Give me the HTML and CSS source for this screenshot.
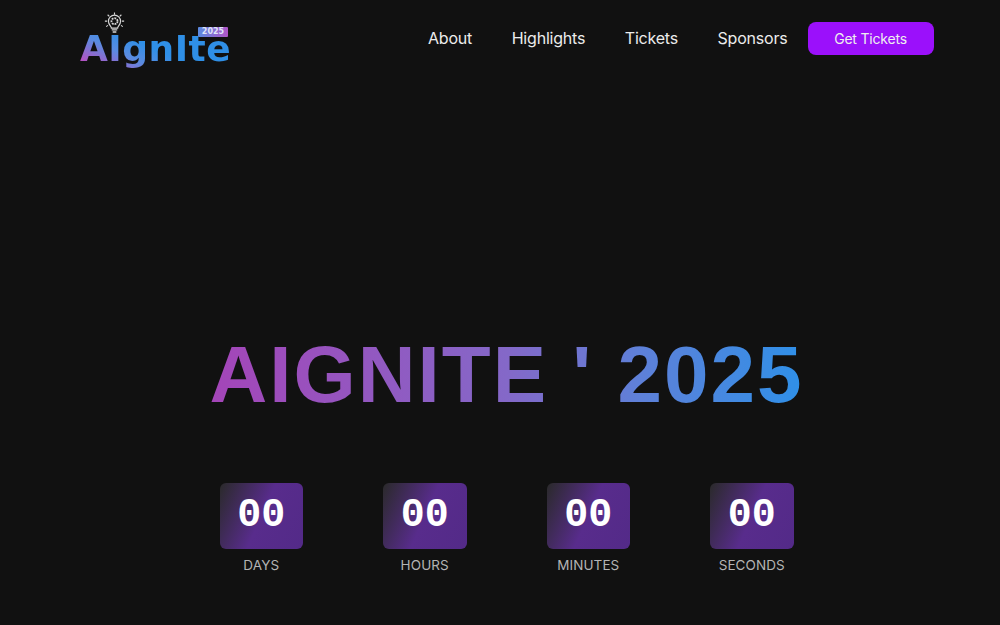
FILE: index.html
```html
<!DOCTYPE html>
<html lang="en">
<head>
  <meta charset="UTF-8">
  <meta name="viewport" content="width=device-width, initial-scale=1.0">
  <title>Aignite 2025</title>
  <link rel="stylesheet" href="styles.css">
</head>
<body>
  <header class="navbar">
    <a class="logo" href="#">
      <svg class="logo-bulb" viewBox="0 0 22 24" width="21" height="22" fill="none" stroke="#d8d8d8">
        <path d="M11 0.5v2.500M3.500 3l1.800 1.800M18.500 3l-1.800 1.800M0.500 10h2.500M19 10h2.500M2 16l1.800-1.400M20 16l-1.800-1.400" stroke-width="1.200"/>
        <path d="M7.600 17.500c0-2-3.200-3.200-3.200-7.500a6.600 6.600 0 0 1 13.200 0c0 4.300-3.200 5.500-3.200 7.500z" stroke-width="1.300"/>
        <circle cx="11" cy="10" r="3.300" stroke-width="2" stroke-dasharray="2 1"/>
        <path d="M8 19.500h6M9 21.800h4" stroke-width="1.500"/>
      </svg>
      <span class="logo-word">AIgnIte</span>
      <span class="logo-year">2025</span>
    </a>
    <nav class="nav-links">
      <a href="#">About</a>
      <a href="#">Highlights</a>
      <a href="#">Tickets</a>
      <a href="#">Sponsors</a>
      <a class="btn-tickets" href="#">Get Tickets</a>
    </nav>
  </header>

  <main class="hero">
    <h1 class="hero-title">AIGNITE ' 2025</h1>
    <div class="countdown">
      <div class="unit">
        <div class="unit-box">00</div>
        <div class="unit-label">DAYS</div>
      </div>
      <div class="unit">
        <div class="unit-box">00</div>
        <div class="unit-label">HOURS</div>
      </div>
      <div class="unit">
        <div class="unit-box">00</div>
        <div class="unit-label">MINUTES</div>
      </div>
      <div class="unit">
        <div class="unit-box">00</div>
        <div class="unit-label">SECONDS</div>
      </div>
    </div>
  </main>
</body>
</html>
```

FILE: styles.css
```css
* {
  box-sizing: border-box;
}
body {
  margin: 0;
  height: 625px;
  overflow: hidden;
  background-color: #111111;
  color: #fff;
  font-family: "Inter", "Liberation Sans", sans-serif;
}
a {
  color: inherit;
  text-decoration: none;
}
.navbar {
  display: flex;
  justify-content: space-between;
  align-items: center;
  height: 76px;
  padding: 0 66.500px 0 80px;
}
.logo {
  position: relative;
  display: block;
  width: 150px;
  height: 60px;
}
.logo-bulb {
  position: absolute;
  left: 24px;
  top: 4px;
}
.logo-word {
  position: absolute;
  left: 0;
  top: 20px;
  font-family: "DejaVu Sans", sans-serif;
  font-size: 36px;
  font-weight: bold;
  line-height: 42px;
  letter-spacing: 0.500px;
  background: linear-gradient(25deg, #b850c0 8%, #5a8be0 32%, #2f8fe6 50%);
  -webkit-background-clip: text;
  background-clip: text;
  color: transparent;
}
.logo-year {
  position: absolute;
  left: 118px;
  top: 19px;
  width: 30px;
  height: 10px;
  background: linear-gradient(90deg, #5a8be0, #b055c8);
  border-radius: 1px;
  font-family: "DejaVu Sans", sans-serif;
  font-size: 8px;
  font-weight: bold;
  line-height: 10px;
  text-align: center;
  color: #dfe4f8;
}
.nav-links {
  display: flex;
  align-items: center;
  gap: 39.500px;
  font-size: 16px;
  letter-spacing: -0.200px;
  color: #ececec;
}
.btn-tickets {
  width: 126px;
  height: 33px;
  margin-left: -19.500px;
  background-color: #9b10fb;
  border-radius: 8px;
  font-size: 14px;
  line-height: 33px;
  text-align: center;
  color: #eee;
}
.hero {
  display: flex;
  flex-direction: column;
  align-items: center;
  padding-top: 253px;
}
.hero-title {
  margin: 0 0 0 13px;
  font-family: "Liberation Sans", Arial, sans-serif;
  font-size: 80px;
  font-weight: bold;
  line-height: 92px;
  letter-spacing: 2px;
  background: linear-gradient(90deg, #a445b8 0%, #8468c8 50%, #5f80d8 72%, #2f90e8 100%);
  -webkit-background-clip: text;
  background-clip: text;
  color: transparent;
}
.countdown {
  display: flex;
  gap: 80px;
  margin-top: 62px;
  margin-left: 13px;
}
.unit {
  display: flex;
  flex-direction: column;
  align-items: center;
  width: 83.500px;
}
.unit-box {
  width: 83.500px;
  height: 66px;
  background: linear-gradient(114deg, #2a2a2a 0%, #582c8c 50%, #532a88 100%);
  border-radius: 6px;
  font-family: "Liberation Mono", monospace;
  font-size: 40px;
  font-weight: bold;
  line-height: 66px;
  text-align: center;
}
.unit-label {
  margin-top: 6px;
  font-size: 13.500px;
  line-height: 20px;
  letter-spacing: 0.100px;
  color: #b4b4b4;
}
```
